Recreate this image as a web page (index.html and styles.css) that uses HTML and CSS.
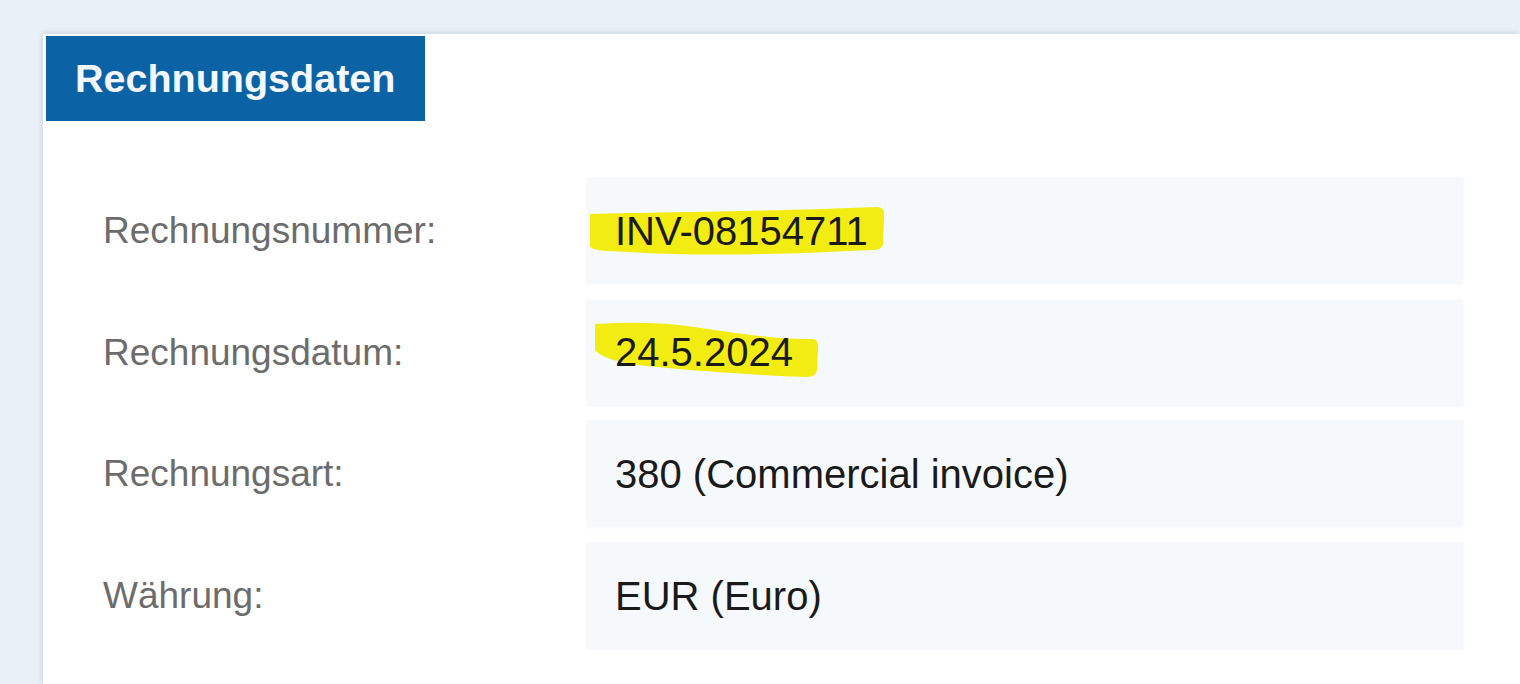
FILE: index.html
```html
<!DOCTYPE html>
<html lang="de">
<head>
<meta charset="utf-8">
<title>Rechnungsdaten</title>
<link rel="stylesheet" href="styles.css">
</head>
<body>
<section class="card">
  <h2 class="tab">Rechnungsdaten</h2>
  <div class="rows">
    <div class="label">Rechnungsnummer:</div>
    <div class="value">
      <svg class="mark" width="300" height="90" viewBox="0 0 300 90" aria-hidden="true">
        <path d="M3 36 C 80 34, 200 33, 290 29 Q 298 29 297 38 L 296 66 Q 295 72 285 72 C 200 76, 120 79, 40 74 C 15 73, 4 72, 3 68 Z"/>
      </svg>
      <span class="text">INV-08154711</span>
    </div>
    <div class="label">Rechnungsdatum:</div>
    <div class="value">
      <svg class="mark" width="240" height="90" viewBox="0 0 240 90" aria-hidden="true">
        <path d="M8 24 C 40 22, 70 22, 100 26 C 150 33, 190 40, 226 39 Q 232 40 231 48 L 230 70 Q 229 77 220 77 C 170 75, 120 72, 60 66 C 30 63, 12 56, 8 50 Z"/>
      </svg>
      <span class="text">24.5.2024</span>
    </div>
    <div class="label">Rechnungsart:</div>
    <div class="value"><span class="text">380 (Commercial invoice)</span></div>
    <div class="label">Währung:</div>
    <div class="value"><span class="text">EUR (Euro)</span></div>
  </div>
</section>
</body>
</html>
```

FILE: styles.css
```css
html, body {
  margin: 0;
  padding: 0;
  height: 100%;
  overflow: hidden;
}
body {
  display: flex;
  flex-direction: column;
  background: #e9f0f8;
  font-family: "Liberation Sans", Arial, sans-serif;
  padding-top: 34px;
  box-sizing: border-box;
}
.card {
  flex: 1;
  margin-left: 42px;
  background: #ffffff;
  border-left: 1px solid #d9e0e8;
  box-shadow: 0 -1px 5px rgba(20, 40, 70, 0.14);
  padding-top: 2px;
  box-sizing: border-box;
}
.tab {
  margin: 0 0 0 3px;
  width: 379px;
  height: 85px;
  box-sizing: border-box;
  padding-left: 29px;
  background: #0b63a5;
  color: #f4f8fc;
  font-size: 39.5px;
  font-weight: bold;
  line-height: 85px;
}
.rows {
  display: grid;
  grid-template-columns: 484px 876px;
  grid-auto-rows: 106px;
  row-gap: 15.7px;
  margin-top: 57px;
  padding-left: 60px;
}
.label {
  display: flex;
  align-items: center;
  color: #6c6c6c;
  font-size: 37px;
}
.value {
  position: relative;
  display: flex;
  align-items: center;
  padding-left: 28px;
  background: #f6f9fc;
  box-shadow: 0 0 2px rgba(200, 210, 220, 0.35);
  color: #1a1a1a;
  font-size: 40px;
}
.value .text {
  position: relative;
  z-index: 1;
}
.mark {
  position: absolute;
  left: 0;
  top: 0;
  fill: #f3ec12;
}
```
